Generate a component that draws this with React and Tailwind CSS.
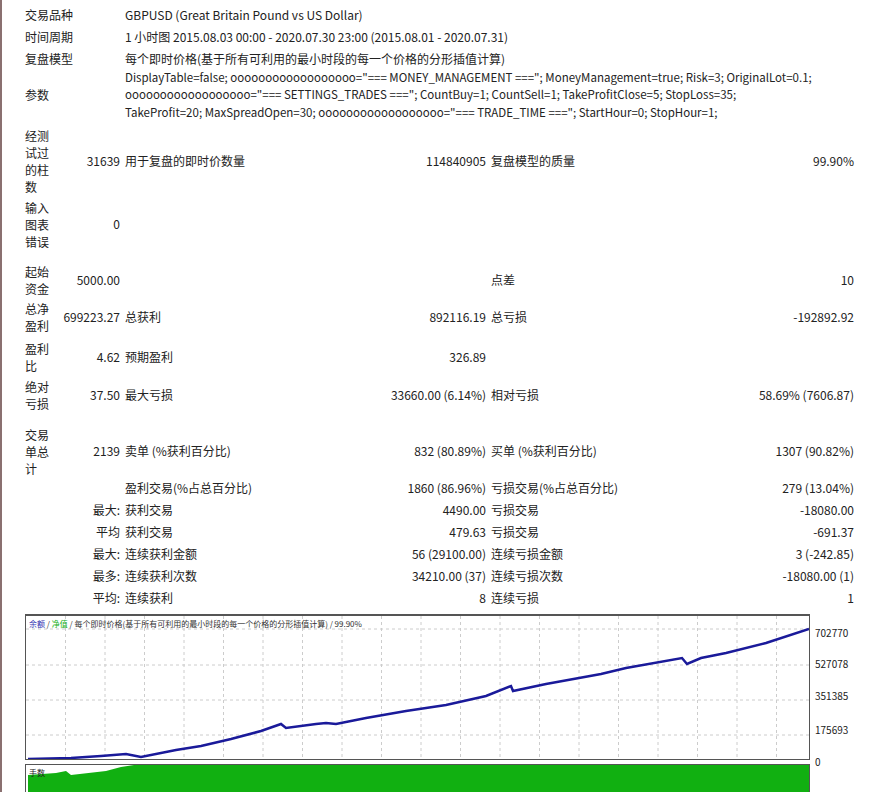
import React from "react";

const F = { fontFamily: '"Noto Sans CJK SC", "Liberation Sans", sans-serif' };

function Row({ h, l1, v1, l2, v2, l3, v3 }) {
  return (
    <div className="flex items-center" style={{ height: h }}>
      <div className="w-[38px] leading-[17px]">{l1}</div>
      <div className="w-[57px] text-right">{v1}</div>
      <div className="ml-[5px] w-[361px] flex justify-between"><span>{l2}</span><span>{v2}</span></div>
      <div className="ml-[5px] w-[363px] flex justify-between"><span>{l3}</span><span>{v3}</span></div>
    </div>
  );
}

const pts = "2,143 45,142 75,140 100,138 115,141 150,134 175,130 205,123 235,115 255,108 260,112 290,108 300,107 310,108 340,102 380,95 420,89 460,80 485,70 487,75 520,68 575,58 600,52 656,42 661,48 675,42 700,37 740,27 783,13";

export default function App() {
  const vx = [];
  for (let i = 1; i < 21; i++) vx.push(i * 39.5);
  return (
    <div className="w-[874px] h-[792px] overflow-hidden bg-white text-[12px] text-[#222] relative" style={F}>
      <div className="absolute left-0 top-0 bottom-0 w-[2px] bg-[#8a7070]" />
      <div className="pl-[25px] pt-[4px]">
        <div className="flex h-[22px] items-center"><div className="w-[100px]">交易品种</div><div>GBPUSD (Great Britain Pound vs US Dollar)</div></div>
        <div className="flex h-[22px] items-center"><div className="w-[100px]">时间周期</div><div>1 小时图 2015.08.03 00:00 - 2020.07.30 23:00 (2015.08.01 - 2020.07.31)</div></div>
        <div className="flex h-[22px] items-center"><div className="w-[100px]">复盘模型</div><div>每个即时价格(基于所有可利用的最小时段的每一个价格的分形插值计算)</div></div>
        <div className="flex h-[50px] items-center"><div className="w-[100px] shrink-0">参数</div><div className="leading-[17.5px] text-[11.5px] whitespace-nowrap">DisplayTable=false; oooooooooooooooooo="=== MONEY_MANAGEMENT ==="; MoneyManagement=true; Risk=3; OriginalLot=0.1;<br/>oooooooooooooooooo="=== SETTINGS_TRADES ==="; CountBuy=1; CountSell=1; TakeProfitClose=5; StopLoss=35;<br/>TakeProfit=20; MaxSpreadOpen=30; oooooooooooooooooo="=== TRADE_TIME ==="; StartHour=0; StopHour=1;</div></div>
        <div className="h-[7px]" />
        <Row h={68} l1={<>经测<br/>试过<br/>的柱<br/>数</>} v1="31639" l2="用于复盘的即时价数量" v2="114840905" l3="复盘模型的质量" v3="99.90%" />
        <Row h={58} l1={<>输入<br/>图表<br/>错误</>} v1="0" />
        <div className="h-[10px]" />
        <Row h={34} l1={<>起始<br/>资金</>} v1="5000.00" l3="点差" v3="10" />
        <Row h={40} l1={<>总净<br/>盈利</>} v1="699223.27" l2="总获利" v2="892116.19" l3="总亏损" v3="-192892.92" />
        <Row h={40} l1={<>盈利<br/>比</>} v1="4.62" l2="预期盈利" v2="326.89" />
        <Row h={36} l1={<>绝对<br/>亏损</>} v1="37.50" l2="最大亏损" v2="33660.00 (6.14%)" l3="相对亏损" v3="58.69% (7606.87)" />
        <div className="h-[12px]" />
        <Row h={52} l1={<>交易<br/>单总<br/>计</>} v1="2139" l2="卖单 (%获利百分比)" v2="832 (80.89%)" l3="买单 (%获利百分比)" v3="1307 (90.82%)" />
        <Row h={22} l2="盈利交易(%占总百分比)" v2="1860 (86.96%)" l3="亏损交易(%占总百分比)" v3="279 (13.04%)" />
        <Row h={22} v1="最大:" l2="获利交易" v2="4490.00" l3="亏损交易" v3="-18080.00" />
        <Row h={22} v1="平均" l2="获利交易" v2="479.63" l3="亏损交易" v3="-691.37" />
        <Row h={22} v1="最大:" l2="连续获利金额" v2="56 (29100.00)" l3="连续亏损金额" v3="3 (-242.85)" />
        <Row h={22} v1="最多:" l2="连续获利次数" v2="34210.00 (37)" l3="连续亏损次数" v3="-18080.00 (1)" />
        <Row h={22} v1="平均:" l2="连续获利" v2="8" l3="连续亏损" v3="1" />
      </div>
      <div className="absolute left-[25px] top-[614px] w-[785px] h-[146px] border border-[#555] border-t-2">
        <svg width="783" height="143" className="absolute left-0 top-0">
          {vx.map((x) => <line key={x} x1={x} y1="0" x2={x} y2="143" stroke="#ccc" strokeDasharray="3 3" />)}
          {[13, 49, 84, 119].map((y) => <line key={y} x1="0" y1={y} x2="783" y2={y} stroke="#ccc" strokeDasharray="3 3" />)}
          <polyline points={pts} fill="none" stroke="#1a1a9a" strokeWidth="2.5" />
        </svg>
        <div className="absolute left-[3px] top-[2px] text-[8px] text-[#333]"><span className="text-[#3030b0]">余额</span> / <span className="text-[#20b020]">净值</span> / 每个即时价格(基于所有可利用的最小时段的每一个价格的分形插值计算) / 99.90%</div>
      </div>
      {[["702770", 625], ["527078", 656], ["351385", 688], ["175693", 722], ["0", 754]].map(([t, y]) => (
        <div key={t} className="absolute left-[815px] text-[10px]" style={{ top: y }}>{t}</div>
      ))}
      <div className="absolute left-[25px] top-[764px] w-[785px] h-[30px] border border-[#555] overflow-hidden">
        <svg width="783" height="30" className="absolute left-0 top-0">
          <polygon points="2,30 2,10 30,8 40,6 45,10 80,6 95,2 108,0 783,0 783,30" fill="#11b011" />
        </svg>
        <div className="absolute left-[3px] top-[2px] text-[8px] text-[#222]">手数</div>
      </div>
    </div>
  );
}
